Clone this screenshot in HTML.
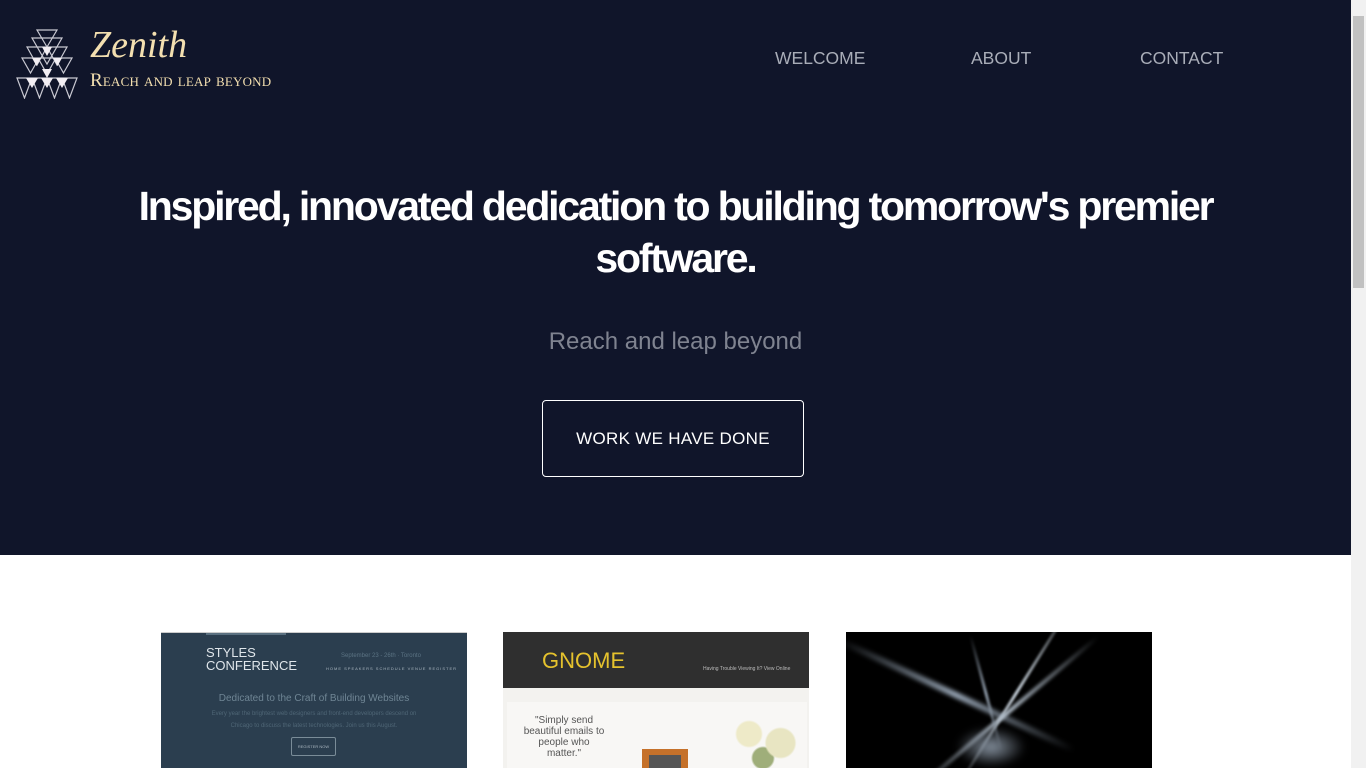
<!DOCTYPE html>
<html><head><meta charset="utf-8"><style>
*{margin:0;padding:0;box-sizing:border-box}
body{width:1366px;height:768px;overflow:hidden;background:#fff;font-family:"Liberation Sans",sans-serif;position:relative}
.hero{position:absolute;left:0;top:0;width:1351px;height:555px;background:#10152a}
.sb{position:absolute;left:1351px;top:0;width:15px;height:768px;background:#f1f1f1}
.thumb{position:absolute;left:2px;top:16px;width:11px;height:272px;background:#c1c1c1}
.brand{position:absolute;left:90px;top:22px;color:#f3dfb0;font-family:"Liberation Serif",serif}
.brand .t{font-size:38px;font-style:italic;line-height:46px}
.brand .s{font-size:19px;font-variant:small-caps;letter-spacing:.2px;margin-top:2px}
.nav a{position:absolute;top:48px;color:#a9adb8;font-size:17.5px;text-decoration:none}
h1{position:absolute;left:0;width:1351px;top:180px;text-align:center;color:#fff;font-size:41px;font-weight:bold;line-height:52px;letter-spacing:-2.2px;padding:0 90px}
.sub{position:absolute;top:328px;width:1351px;text-align:center;color:#7f8390;font-size:24px;font-weight:300}
.btn{position:absolute;left:542px;top:400px;width:262px;height:77px;border:1px solid #fff;border-radius:4px;color:#fff;font-size:17px;text-align:center;line-height:75px;letter-spacing:.3px}
.card{position:absolute;top:632px;width:306px;height:136px;overflow:hidden}
</style></head><body>
<div class="hero">
<svg style="position:absolute;left:16px;top:29px" width="62" height="70" viewBox="0 0 62 70">
<g stroke="#c9c9d2" stroke-width="1.2" fill="none">
<path d="M21 1h20l-10 17z"/>
<path d="M16 9h30l-15 26z"/>
<path d="M11 18h20l-10 18zM31 18h20l-10 18z"/>
<path d="M6 29h17l-8.5 15zM22 29h18l-9 16zM39 29h17l-8.5 15z"/>
<path d="M1 49h15l-7.5 20zM16 49h15l-7.5 20zM31 49h15l-7.5 20zM46 49h15l-7.5 20z"/>
</g>
<g fill="#f2eef3">
<path d="M26 18h10l-5 9z"/><path d="M16 29h9l-4.5 8zM37 29h9l-4.5 8z"/>
<path d="M26 40h10l-5 9z"/>
<path d="M10 49h12l-6 10zM25 49h12l-6 10zM40 49h12l-6 10z"/>
</g></svg>
<div class="brand"><div class="t">Zenith</div><div class="s">Reach and leap beyond</div></div>
<div class="nav"><a style="left:775px">WELCOME</a><a style="left:971px">ABOUT</a><a style="left:1140px">CONTACT</a></div>
<h1>Inspired, innovated dedication to building tomorrow's premier software.</h1>
<div class="sub">Reach and leap beyond</div>
<div class="btn">WORK WE HAVE DONE</div>
</div>
<div class="card" style="left:161px;background:#2b3e4f;border-top:1px solid #ccc">
<div style="position:absolute;left:45px;top:0;width:80px;height:2px;background:#5a7080"></div>
<div style="position:absolute;left:45px;top:13px;color:#dfe5ea;font-size:13px;line-height:13px">STYLES<br>CONFERENCE</div>
<div style="position:absolute;left:180px;top:20px;color:#5b7383;font-size:6px">September 23 - 26th · Toronto</div>
<div style="position:absolute;left:165px;top:33px;color:#aab6c0;font-size:4px;letter-spacing:1px">HOME SPEAKERS SCHEDULE VENUE REGISTER</div>
<div style="position:absolute;left:0;width:306px;top:60px;text-align:center;color:#6f8594;font-size:10px">Dedicated to the Craft of Building Websites</div>
<div style="position:absolute;left:0;width:306px;top:75px;text-align:center;color:#4f6676;font-size:6px;line-height:12px">Every year the brightest web designers and front-end developers descend on<br>Chicago to discuss the latest technologies. Join us this August.</div>
<div style="position:absolute;left:130px;top:104px;width:45px;height:19px;border:1px solid #7a8c98;border-radius:2px;color:#aab6c0;font-size:4px;text-align:center;line-height:17px">REGISTER NOW</div>
</div>
<div class="card" style="left:503px;background:#f3f2ef">
<div style="position:absolute;left:0;top:0;width:306px;height:56px;background:#2f2f2f"></div>
<div style="position:absolute;left:39px;top:16px;color:#e5c22d;font-size:22px">GNOME</div>
<div style="position:absolute;left:200px;top:34px;color:#bbb;font-size:5px">Having Trouble Viewing It? View Online</div>
<div style="position:absolute;left:4px;top:70px;width:300px;height:70px;background:#f8f7f5"></div>
<div style="position:absolute;left:20px;top:83px;color:#555;font-size:10px;line-height:11px;text-align:center;width:82px">"Simply send beautiful emails to people who matter."</div>
<div style="position:absolute;left:139px;top:117px;width:46px;height:30px;background:#c5712a"></div>
<div style="position:absolute;left:146px;top:123px;width:32px;height:20px;background:#555"></div>
<div style="position:absolute;left:225px;top:78px;width:70px;height:60px;background:radial-gradient(circle at 30% 40%,#eeeac8 0 12px,transparent 14px),radial-gradient(circle at 75% 55%,#e8e5c2 0 14px,transparent 16px),radial-gradient(circle at 50% 80%,#9fae7a 0 10px,transparent 12px)"></div>
</div>
<div class="card" style="left:846px;background:#000">
<div style="position:absolute;left:60px;top:60px;width:220px;height:3px;background:linear-gradient(90deg,transparent,#c8d2dc,transparent);transform:rotate(-58deg);filter:blur(1px)"></div>
<div style="position:absolute;left:-20px;top:60px;width:260px;height:6px;background:linear-gradient(90deg,transparent,#9aa8b8,transparent);transform:rotate(25deg);filter:blur(2px)"></div>
<div style="position:absolute;left:40px;top:80px;width:240px;height:4px;background:linear-gradient(90deg,transparent,#b8c4d0,transparent);transform:rotate(-40deg);filter:blur(1.5px)"></div>
<div style="position:absolute;left:80px;top:60px;width:120px;height:3px;background:linear-gradient(90deg,transparent,#8a96a4,transparent);transform:rotate(75deg);filter:blur(1px)"></div>
<div style="position:absolute;left:110px;top:95px;width:70px;height:40px;background:radial-gradient(ellipse,#8894a2,transparent 70%);filter:blur(4px)"></div>
</div>
<div class="sb"><div class="thumb"></div></div>
</body></html>
